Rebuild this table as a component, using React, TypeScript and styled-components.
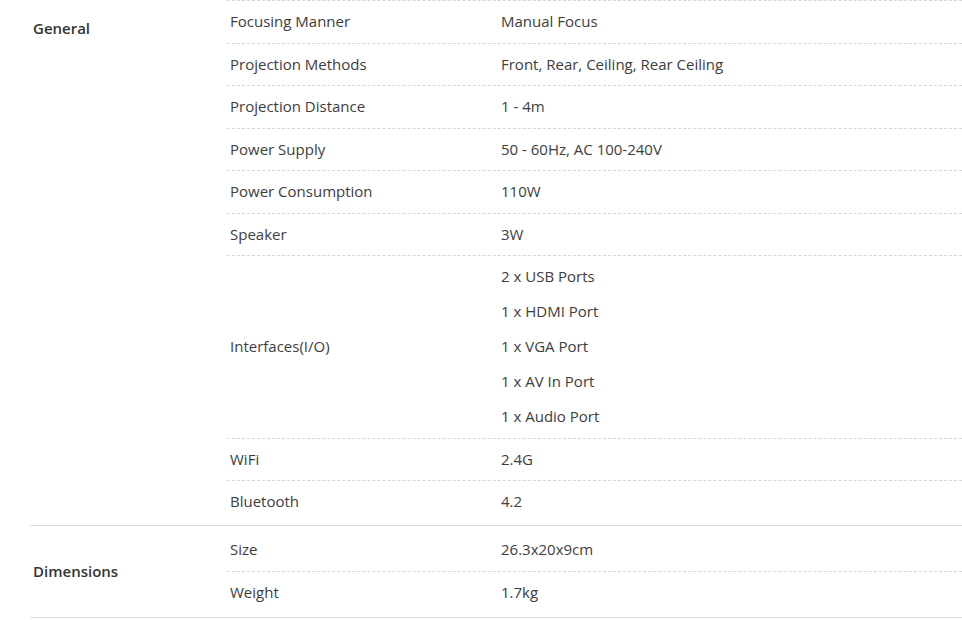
import React from "react";
import styled, { createGlobalStyle, css } from "styled-components";

const GlobalStyle = createGlobalStyle`
  html, body {
    margin: 0;
    padding: 0;
    background: #ffffff;
  }
  body {
    font-family: "Open Sans", "Noto Sans", Arial, sans-serif;
    color: #3d3d3d;
    font-size: 15px;
  }
`;

const Page = styled.div`
  padding-left: 30px;
  width: 932px;
`;

const Group = styled.section`
  display: grid;
  grid-template-columns: 197px 1fr;
  border-bottom: 1px solid #dcdcdc;
`;

const GroupLabel = styled.div<{ $top?: boolean }>`
  padding-left: 3px;
  font-weight: 600;
  color: #333333;
  line-height: 22.5px;
  display: flex;
  ${(p) =>
    p.$top
      ? css`
          align-items: flex-start;
          padding-top: 17px;
        `
      : css`
          align-items: center;
        `}
`;

const Rows = styled.div<{ $continued?: boolean }>`
  display: flex;
  flex-direction: column;
  padding: ${(p) => (p.$continued ? "0 0 2px" : "2.5px 0 4px")};
`;

const Row = styled.div<{ $first?: boolean }>`
  display: grid;
  grid-template-columns: 271px 1fr;
  align-items: center;
  padding: 9px 0 10px;
  line-height: 22.5px;
  border-top: 1px dashed #d6d6d6;
  ${(p) =>
    p.$first &&
    css`
      border-top-color: transparent;
    `}
`;

const Key = styled.div`
  padding-left: 3px;
`;

const Values = styled.div`
  display: flex;
  flex-direction: column;
  gap: 12.5px;
  padding-left: 3px;
`;

type Spec = { key: string; values: string[] };

const general: Spec[] = [
  { key: "Focusing Manner", values: ["Manual Focus"] },
  { key: "Projection Methods", values: ["Front, Rear, Ceiling, Rear Ceiling"] },
  { key: "Projection Distance", values: ["1 - 4m"] },
  { key: "Power Supply", values: ["50 - 60Hz, AC 100-240V"] },
  { key: "Power Consumption", values: ["110W"] },
  { key: "Speaker", values: ["3W"] },
  {
    key: "Interfaces(I/O)",
    values: ["2 x USB Ports", "1 x HDMI Port", "1 x VGA Port", "1 x AV In Port", "1 x Audio Port"],
  },
  { key: "WiFi", values: ["2.4G"] },
  { key: "Bluetooth", values: ["4.2"] },
];

const dimensions: Spec[] = [
  { key: "Size", values: ["26.3x20x9cm"] },
  { key: "Weight", values: ["1.7kg"] },
];

const SpecGroup: React.FC<{ title: string; specs: Spec[]; continued?: boolean }> = ({
  title,
  specs,
  continued,
}) => (
  <Group>
    <GroupLabel $top={continued}>{title}</GroupLabel>
    <Rows $continued={continued}>
      {specs.map((s, i) => (
        <Row key={s.key} $first={i === 0 && !continued}>
          <Key>{s.key}</Key>
          <Values>
            {s.values.map((v) => (
              <span key={v}>{v}</span>
            ))}
          </Values>
        </Row>
      ))}
    </Rows>
  </Group>
);

export default function App() {
  return (
    <>
      <GlobalStyle />
      <Page>
        <SpecGroup title="General" specs={general} continued />
        <SpecGroup title="Dimensions" specs={dimensions} />
      </Page>
    </>
  );
}
